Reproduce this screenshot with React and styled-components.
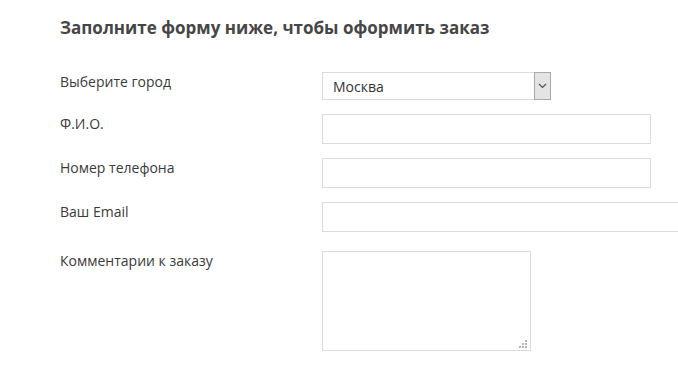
import React from "react";
import styled, { createGlobalStyle } from "styled-components";

const GlobalStyle = createGlobalStyle`
  * {
    box-sizing: border-box;
  }
  body {
    margin: 0;
    background: #fff;
    font-family: "Open Sans", "Liberation Sans", sans-serif;
    overflow: hidden;
  }
`;

function App() {
  return (
    <>
      <GlobalStyle />
      <Container>
        <Title>Заполните форму ниже, чтобы оформить заказ</Title>
        <Form>
          <Row>
            <Label>Выберите город</Label>
            <SelectBox>
              <Select defaultValue="Москва">
                <option>Москва</option>
                <option>Санкт-Петербург</option>
              </Select>
              <Arrow>
                <svg width="9" height="6" viewBox="0 0 9 6">
                  <path d="M1 1l3.5 3.5L8 1" fill="none" stroke="#555" strokeWidth="1.2" />
                </svg>
              </Arrow>
            </SelectBox>
          </Row>
          <Row>
            <Label>Ф.И.О.</Label>
            <Input width={329} />
          </Row>
          <Row>
            <Label>Номер телефона</Label>
            <Input width={329} />
          </Row>
          <Row space={19}>
            <Label>Ваш Email</Label>
            <Input width={420} />
          </Row>
          <Row>
            <Label>Комментарии к заказу</Label>
            <AreaWrap>
              <TextArea />
              <Grip width="9" height="9" viewBox="0 0 9 9">
                <rect x="6" y="0" width="2" height="2" fill="#b5b5b5" />
                <rect x="3" y="3" width="2" height="2" fill="#b5b5b5" />
                <rect x="6" y="3" width="2" height="2" fill="#b5b5b5" />
                <rect x="0" y="6" width="2" height="2" fill="#b5b5b5" />
                <rect x="3" y="6" width="2" height="2" fill="#b5b5b5" />
                <rect x="6" y="6" width="2" height="2" fill="#b5b5b5" />
              </Grip>
            </AreaWrap>
          </Row>
        </Form>
      </Container>
    </>
  );
}

const Container = styled.div`
  padding: 16px 0 0 60px;
  width: 678px;
  height: 382px;
  overflow: hidden;
`;

const Title = styled.h2`
  margin: 0 0 32px;
  font-size: 17px;
  line-height: 24px;
  font-weight: 700;
  color: #464646;
`;

const Form = styled.div`
  display: flex;
  flex-direction: column;
`;

const Row = styled.div`
  display: flex;
  align-items: flex-start;
  margin-bottom: ${(p) => p.space || 14}px;
`;

const Label = styled.div`
  width: 262px;
  flex-shrink: 0;
  font-size: 14px;
  line-height: 20px;
  color: #3a3a3a;
`;

const SelectBox = styled.div`
  display: flex;
  width: 229px;
  height: 28px;
  border: 1px solid #dcdcdc;
  background: #fff;
`;

const Select = styled.select`
  flex: 1;
  appearance: none;
  border: none;
  outline: none;
  background: transparent;
  padding: 0 0 0 10px;
  font-family: "Open Sans", "Liberation Sans", sans-serif;
  font-size: 14px;
  color: #333;
`;

const Arrow = styled.div`
  width: 17px;
  margin: -1px -1px -1px 0;
  border: 1px solid #a9a9a9;
  background: #e4e4e4;
  display: flex;
  align-items: center;
  justify-content: center;
`;

const Input = styled.input`
  width: ${(p) => p.width}px;
  flex-shrink: 0;
  height: 30px;
  border: 1px solid #dcdcdc;
  outline: none;
  padding: 0 10px;
  font-family: "Open Sans", "Liberation Sans", sans-serif;
  font-size: 14px;
`;

const AreaWrap = styled.div`
  position: relative;
  width: 209px;
  height: 100px;
`;

const TextArea = styled.textarea`
  display: block;
  width: 100%;
  height: 100%;
  border: 1px solid #dcdcdc;
  outline: none;
  resize: none;
  padding: 6px 10px;
  font-family: "Open Sans", "Liberation Sans", sans-serif;
  font-size: 14px;
`;

const Grip = styled.svg`
  position: absolute;
  right: 3px;
  bottom: 2px;
`;

export default App;
